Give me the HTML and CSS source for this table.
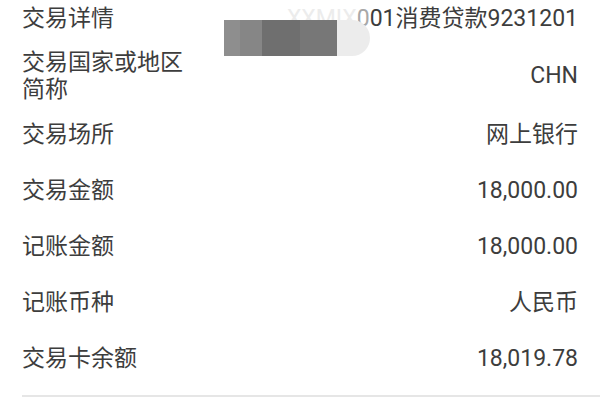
FILE: index.html
```html
<!DOCTYPE html>
<html lang="zh-CN">
<head>
<meta charset="utf-8">
<title>交易详情</title>
<link rel="stylesheet" href="styles.css">
</head>
<body>
<div class="list">
  <div class="row first">
    <span class="label">交易详情</span>
    <span class="value"><span class="faded">XXMIX</span><span class="half">0</span>01消费贷款9231201</span>
    <div class="mosaic">
      <i class="c1"></i><i class="c2"></i><i class="c3"></i><i class="c4"></i><i class="c5"></i>
    </div>
  </div>
  <div class="row multi">
    <span class="label">交易国家或地区简称</span>
    <span class="value">CHN</span>
  </div>
  <div class="row">
    <span class="label">交易场所</span>
    <span class="value">网上银行</span>
  </div>
  <div class="row">
    <span class="label">交易金额</span>
    <span class="value">18,000.00</span>
  </div>
  <div class="row">
    <span class="label">记账金额</span>
    <span class="value">18,000.00</span>
  </div>
  <div class="row">
    <span class="label">记账币种</span>
    <span class="value">人民币</span>
  </div>
  <div class="row last">
    <span class="label">交易卡余额</span>
    <span class="value">18,019.78</span>
  </div>
</div>
</body>
</html>
```

FILE: styles.css
```css
html, body {
  margin: 0;
  padding: 0;
  background: #ffffff;
}

body {
  width: 600px;
  height: 400px;
  overflow: hidden;
  font-family: "Roboto", "Noto Sans CJK SC", sans-serif;
  font-size: 23px;
  line-height: 27px;
  color: #3d3d3d;
}

.list {
  display: flex;
  flex-direction: column;
}

.row {
  position: relative;
  display: flex;
  justify-content: space-between;
  align-items: center;
  padding: 14.5px 22px;
}

.row.first {
  padding-top: 5px;
}

.row.multi {
  padding-top: 2px;
  padding-bottom: 3.5px;
}

.row.last {
  padding-bottom: 23.5px;
  margin-left: 22px;
  padding-left: 0;
  border-bottom: 2px solid #e6e6e6;
}

.label {
  max-width: 165px;
}

.value {
  text-align: right;
  white-space: nowrap;
}

.faded {
  color: #ececec;
}

.half {
  color: #a8a8a8;
}

.mosaic {
  position: absolute;
  left: 224px;
  top: 20px;
  height: 36px;
  display: flex;
}

.mosaic i {
  display: block;
  height: 100%;
}

.mosaic .c1 { width: 16px; background: #8e8e8e; }
.mosaic .c2 { width: 22px; background: #868686; }
.mosaic .c3 { width: 38px; background: #6f6f6f; }
.mosaic .c4 { width: 37px; background: #777777; }
.mosaic .c5 {
  width: 33px;
  background: #ececec;
  border-radius: 0 18px 18px 0;
}
```
